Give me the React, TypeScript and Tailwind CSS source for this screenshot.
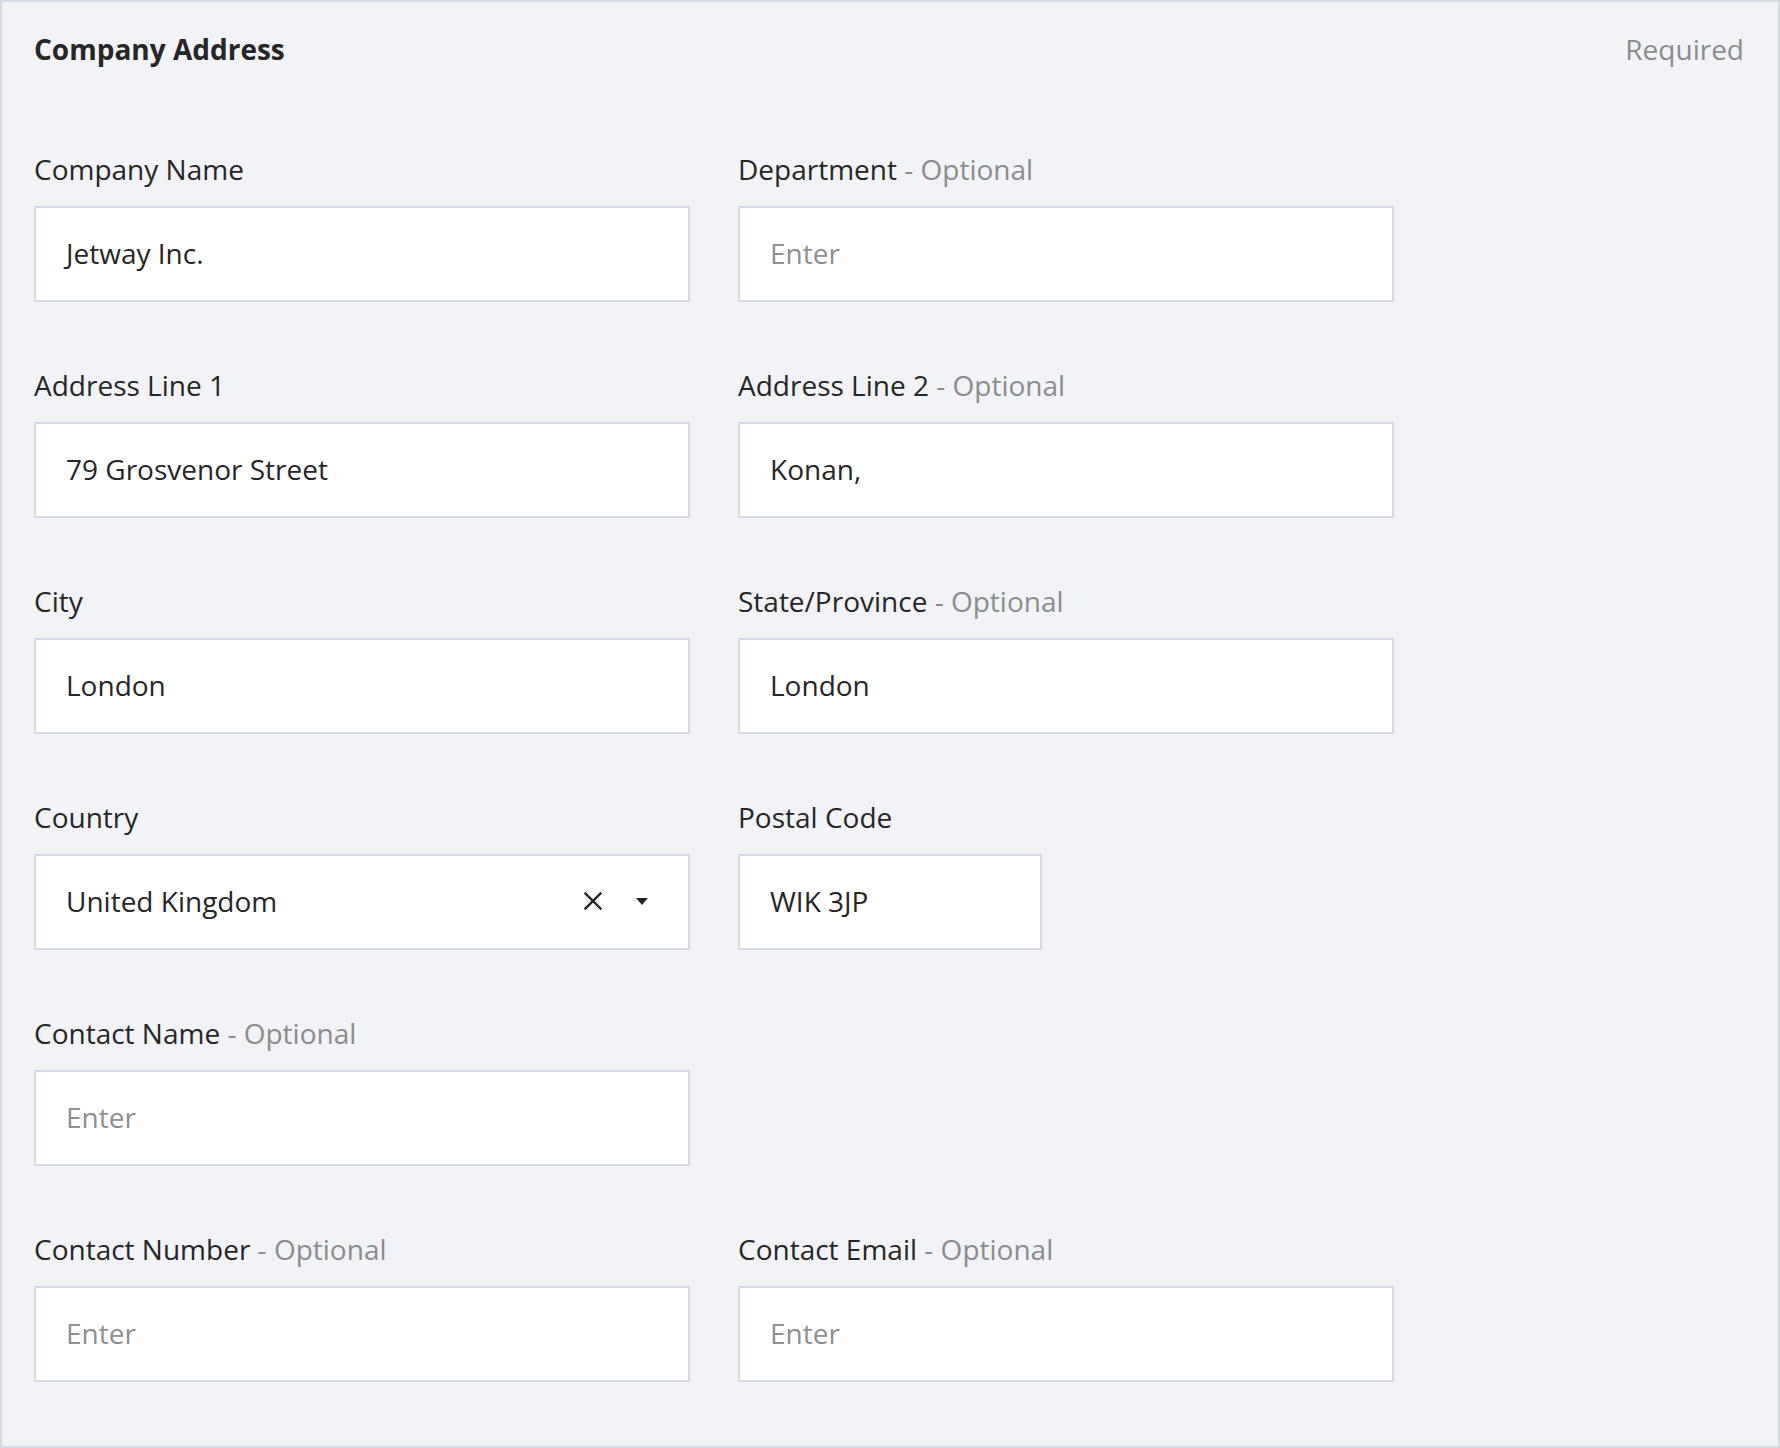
type Field = {
  label: string;
  optional?: boolean;
  value?: string;
  select?: boolean;
  narrow?: boolean;
};

const rows: (Field | null)[][] = [
  [
    { label: "Company Name", value: "Jetway Inc." },
    { label: "Department", optional: true },
  ],
  [
    { label: "Address Line 1", value: "79 Grosvenor Street" },
    { label: "Address Line 2", optional: true, value: "Konan," },
  ],
  [
    { label: "City", value: "London" },
    { label: "State/Province", optional: true, value: "London" },
  ],
  [
    { label: "Country", value: "United Kingdom", select: true },
    { label: "Postal Code", value: "WIK 3JP", narrow: true },
  ],
  [{ label: "Contact Name", optional: true }, null],
  [
    { label: "Contact Number", optional: true },
    { label: "Contact Email", optional: true },
  ],
];

function FormField({ field }: { field: Field }) {
  return (
    <div className="flex flex-col">
      <label className="h-10 text-[28px] leading-[38px] text-[#262626]">
        {field.label}
        {field.optional && (
          <span className="text-[#8c8c8c]"> - Optional</span>
        )}
      </label>
      <div
        className={`mt-4 flex h-[96px] items-center border-2 border-[#d5dae1] bg-white pb-[2px] pl-[30px] pr-[40px] text-[28px] ${
          field.narrow ? "w-[304px]" : "w-full"
        }`}
      >
        <span
          className={`flex-1 ${field.value ? "text-[#262626]" : "text-[#8f8f8f]"}`}
        >
          {field.value ?? "Enter"}
        </span>
        {field.select && (
          <div className="flex items-center gap-[34px]">
            {/* clear */}
            <svg width="18" height="18" viewBox="0 0 18 18" aria-hidden="true">
              <path
                d="M1.5 1.5l15 15M16.5 1.5l-15 15"
                stroke="#262626"
                strokeWidth="2.4"
                strokeLinecap="square"
              />
            </svg>
            {/* caret */}
            <svg width="12" height="7" viewBox="0 0 12 7" aria-hidden="true">
              <path d="M0 0h12L6 7z" fill="#262626" />
            </svg>
          </div>
        )}
      </div>
    </div>
  );
}

export default function App() {
  return (
    <div
      className="h-[1448px] w-[1780px] border-2 border-[#d5dae1] bg-[#f2f3f6] pl-8 pr-[34px] pt-[27px]"
      style={{ fontFamily: '"Open Sans", sans-serif' }}
    >
      {/* Header */}
      <div className="flex h-10 items-center justify-between">
        <h2 className="text-[28px] font-bold leading-10 text-[#262626]">
          Company Address
        </h2>
        <span className="text-[28px] leading-10 text-[#8c8c8c]">Required</span>
      </div>

      {/* Fields */}
      <div className="mt-[81px] grid grid-cols-[656px_656px] gap-x-[48px] gap-y-[64px]">
        {rows.flatMap((row, i) =>
          row.map((field, j) =>
            field ? (
              <FormField key={`${i}-${j}`} field={field} />
            ) : (
              <div key={`${i}-${j}`} />
            )
          )
        )}
      </div>
    </div>
  );
}
